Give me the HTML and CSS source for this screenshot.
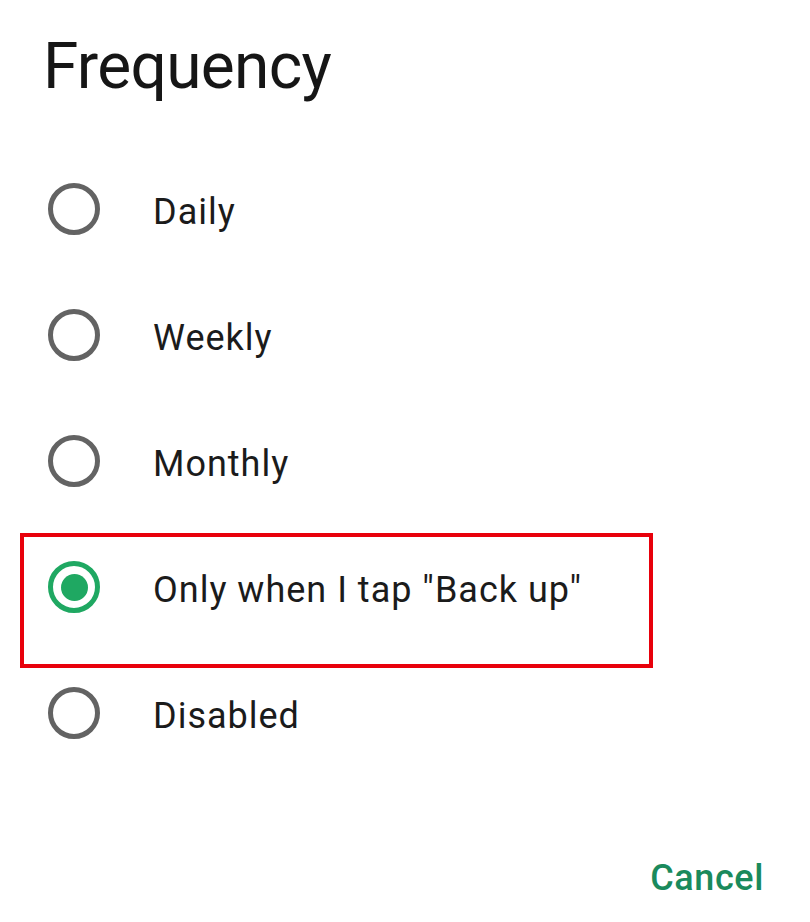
FILE: index.html
```html
<!DOCTYPE html>
<html lang="en">
<head>
<meta charset="utf-8">
<title>Frequency</title>
<link rel="stylesheet" href="styles.css">
</head>
<body>
<div class="dialog">
  <h1 class="title">Frequency</h1>
  <ul class="options">
    <li class="option"><span class="radio"></span><span class="label">Daily</span></li>
    <li class="option"><span class="radio"></span><span class="label">Weekly</span></li>
    <li class="option"><span class="radio"></span><span class="label">Monthly</span></li>
    <li class="option option-selected"><span class="radio radio-checked"></span><span class="label">Only when I tap "Back up"</span><span class="highlight"></span></li>
    <li class="option"><span class="radio"></span><span class="label">Disabled</span></li>
  </ul>
  <div class="actions">
    <span class="btn-cancel">Cancel</span>
  </div>
</div>
</body>
</html>
```
FILE: styles.css
```css
html, body {
  margin: 0;
  padding: 0;
  background: #ffffff;
}
body {
  font-family: Roboto, "Noto Sans", "Liberation Sans", sans-serif;
  color: #1b1b1b;
  width: 810px;
  height: 922px;
  overflow: hidden;
}
.dialog {
  position: relative;
  display: flex;
  flex-direction: column;
}
.title {
  margin: 29px 0 0 43px;
  font-size: 64px;
  font-weight: 400;
  line-height: 75px;
  height: 75px;
  color: #161616;
  letter-spacing: -0.7px;
}
.options {
  list-style: none;
  margin: 42px 0 0 0;
  padding: 0;
  display: flex;
  flex-direction: column;
}
.option {
  height: 126px;
  display: flex;
  align-items: center;
  padding-left: 48px;
  gap: 53px;
}
.radio {
  width: 52px;
  height: 52px;
  box-sizing: border-box;
  border: 5px solid #636363;
  border-radius: 50%;
  flex: none;
  display: flex;
  align-items: center;
  justify-content: center;
}
.radio-checked {
  border-color: #1fa862;
}
.radio-checked::after {
  content: "";
  width: 27px;
  height: 27px;
  border-radius: 50%;
  background: #1fa862;
}
.label {
  font-size: 36px;
  line-height: 42px;
  color: #1b1b1b;
  margin-top: 5px;
  letter-spacing: 1px;
}
.option-selected {
  position: relative;
}
.highlight {
  position: absolute;
  left: 20px;
  top: 9px;
  width: 633px;
  height: 135px;
  box-sizing: border-box;
  border: 4px solid #e8000b;
  pointer-events: none;
}
.actions {
  display: flex;
  justify-content: flex-end;
  padding: 81px 46px 0 0;
}
.btn-cancel {
  font-size: 36px;
  font-weight: 500;
  line-height: 42px;
  color: #1a8a5c;
  letter-spacing: 0.6px;
}
```
